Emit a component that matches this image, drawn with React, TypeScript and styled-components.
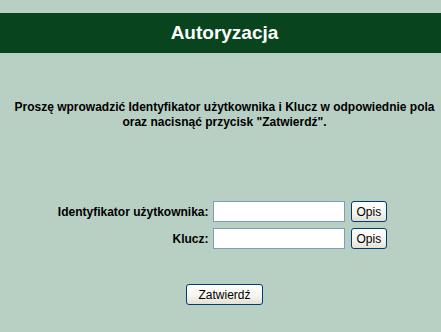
import React, { useState } from 'react';
import styled, { createGlobalStyle } from 'styled-components';

const GlobalStyle = createGlobalStyle`
  html, body {
    margin: 0;
    padding: 0;
    background-color: #b8cfc3;
    font-family: "Liberation Sans", Arial, sans-serif;
  }
`;

const App: React.FC = () => {
  const [ login, setLogin ] = useState('');
  const [ key, setKey ] = useState('');

  return (
    <>
      <GlobalStyle />
      <Page>
        <Header>Autoryzacja</Header>
        <Message>
          Proszę wprowadzić Identyfikator użytkownika i Klucz w odpowiednie pola
          <br />
          oraz nacisnąć przycisk "Zatwierdź".
        </Message>
        <Form onSubmit={ e => e.preventDefault() }>
          <Label htmlFor="login">Identyfikator użytkownika:</Label>
          <Input id="login" value={login} onChange={ e => setLogin(e.target.value) } />
          <Button type="button">Opis</Button>
          <Label htmlFor="key">Klucz:</Label>
          <Input id="key" type="password" value={key} onChange={ e => setKey(e.target.value) } />
          <Button type="button">Opis</Button>
        </Form>
        <Footer>
          <Button type="submit" wide>Zatwierdź</Button>
        </Footer>
      </Page>
    </>
  );
}

const Page = styled.div`
  min-height: 100vh;
  padding-top: 13px;
  box-sizing: border-box;
  overflow: hidden;
`;

const Header = styled.h1`
  margin: 0;
  height: 40px;
  background-color: #08451f;
  color: #ffffff;
  font-size: 19px;
  font-weight: bold;
  display: flex;
  align-items: center;
  justify-content: center;
  padding-left: 8px;
`;

const Message = styled.p`
  margin: 47px 0 0;
  padding-left: 8px;
  text-align: center;
  white-space: nowrap;
  font-size: 12px;
  line-height: 15px;
  font-weight: bold;
  color: #000000;
`;

const Form = styled.form`
  display: grid;
  grid-template-columns: auto 132px auto;
  column-gap: 4px;
  row-gap: 6px;
  align-items: center;
  justify-content: center;
  margin: 71px 0 0;
  padding-left: 4px;
`;

const Label = styled.label`
  text-align: right;
  font-size: 12px;
  font-weight: bold;
  color: #000000;
`;

const Input = styled.input`
  box-sizing: border-box;
  width: 132px;
  height: 21px;
  margin: 0;
  border: 1px solid #7f9db9;
  background: #ffffff;
  font-family: inherit;
  font-size: 12px;
  padding: 1px 3px;
  outline: none;
`;

const Button = styled.button<{ wide?: boolean }>`
  box-sizing: border-box;
  height: 21px;
  margin-left: ${ props => props.wide ? '0' : '2px' };
  padding: 0 ${ props => props.wide ? '11px' : '5px' };
  border: 1px solid #003c74;
  border-radius: 3px;
  background: linear-gradient(to bottom, #ffffff 0%, #f4f3ee 60%, #e3e0d4 100%);
  font-family: inherit;
  font-size: 12px;
  color: #000000;
  cursor: pointer;
`;

const Footer = styled.div`
  display: flex;
  justify-content: center;
  margin-top: 35px;
  padding-left: 8px;
`;

export default App;
